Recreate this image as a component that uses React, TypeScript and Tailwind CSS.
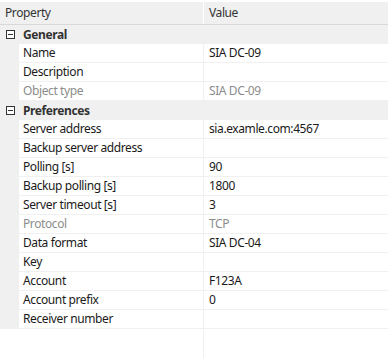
import React from "react";

type Row =
  | { group: string }
  | { label: string; value?: string; disabled?: boolean };

const rows: Row[] = [
  { group: "General" },
  { label: "Name", value: "SIA DC-09" },
  { label: "Description" },
  { label: "Object type", value: "SIA DC-09", disabled: true },
  { group: "Preferences" },
  { label: "Server address", value: "sia.examle.com:4567" },
  { label: "Backup server address" },
  { label: "Polling [s]", value: "90" },
  { label: "Backup polling [s]", value: "1800" },
  { label: "Server timeout [s]", value: "3" },
  { label: "Protocol", value: "TCP", disabled: true },
  { label: "Data format", value: "SIA DC-04" },
  { label: "Key" },
  { label: "Account", value: "F123A" },
  { label: "Account prefix", value: "0" },
  { label: "Receiver number" },
];

function MinusBox() {
  return (
    <svg width="9" height="9" viewBox="0 0 9 9" className="block">
      <rect x="0.5" y="0.5" width="8" height="8" fill="white" stroke="#333" />
      <path d="M2 4.5h5" stroke="#333" />
    </svg>
  );
}

export default function App() {
  return (
    <div
      className="flex h-[358px] w-[388px] flex-col bg-white pt-[2px] text-[12px] leading-none tracking-[-0.4px] text-[#1a1a1a]"
      style={{ fontFamily: '"Segoe UI", "Noto Sans", sans-serif' }}
    >
      <div className="flex h-[23px] shrink-0 border-b border-[#d9d9d9] bg-[#f0f0f0] text-[#333]">
        <div className="flex w-[204px] items-center border-r border-white pl-[5px]">Property</div>
        <div className="flex flex-1 items-center pl-[5px]">Value</div>
      </div>

      {rows.map((r, i) =>
        "group" in r ? (
          <div key={i} className="flex h-[19px] shrink-0 items-center bg-[#f0f0f0]">
            <div className="flex w-[19px] justify-center pl-[1px]">
              <MinusBox />
            </div>
            <span className="pl-[4px] font-bold text-[#333]">{r.group}</span>
          </div>
        ) : (
          <div key={i} className="flex h-[19px] shrink-0">
            <div className="w-[19px] bg-[#f0f0f0]" />
            <div
              className={`flex w-[185px] items-center border-b border-r border-[#f0f0f0] pl-[4px] ${
                r.disabled ? "text-[#8c8c8c]" : ""
              }`}
            >
              {r.label}
            </div>
            <div
              className={`flex flex-1 items-center border-b border-[#f0f0f0] pl-[5px] ${
                r.disabled ? "text-[#8c8c8c]" : ""
              }`}
            >
              {r.value}
            </div>
          </div>
        )
      )}

      <div className="flex flex-1">
        <div className="w-[204px] border-r border-[#f0f0f0]" />
      </div>
    </div>
  );
}
